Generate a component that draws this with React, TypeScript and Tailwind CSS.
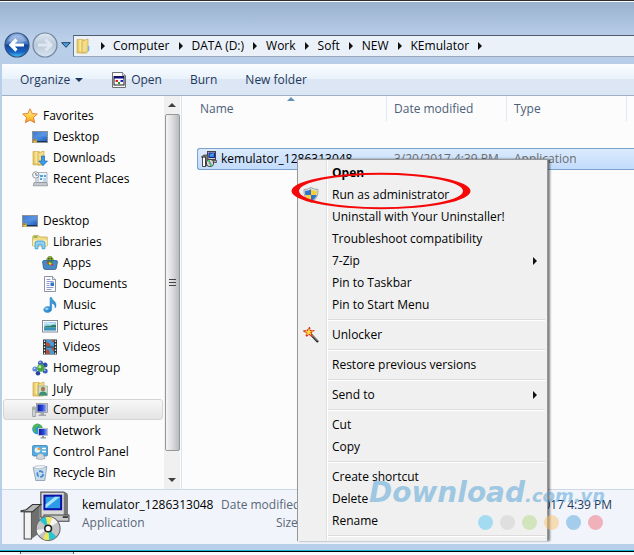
import type { ReactNode } from "react";

type IconProps = { children: ReactNode; box?: string; size?: string };

function Icon({ children, box = "0 0 16 16", size = "size-4" }: IconProps) {
  return (
    <svg viewBox={box} className={`${size} shrink-0`} aria-hidden="true">
      {children}
    </svg>
  );
}

function Gradients() {
  return (
    <svg className="absolute size-0" aria-hidden="true">
      <defs>
        <linearGradient id="g-screen" x1="0" y1="0" x2="1" y2="1">
          <stop offset="0" stopColor="#1c4fae" />
          <stop offset=".5" stopColor="#4a8be0" />
          <stop offset="1" stopColor="#1b56b4" />
        </linearGradient>
        <linearGradient id="g-navy" x1="0" y1="0" x2="1" y2="0">
          <stop offset="0" stopColor="#0a1c9c" />
          <stop offset=".55" stopColor="#2a45d8" />
          <stop offset="1" stopColor="#9db4f5" />
        </linearGradient>
        <linearGradient id="g-folder" x1="0" y1="0" x2="1" y2="0">
          <stop offset="0" stopColor="#e3bf4c" />
          <stop offset=".5" stopColor="#f9e89c" />
          <stop offset="1" stopColor="#e0bb50" />
        </linearGradient>
        <linearGradient id="g-star" x1="0" y1="0" x2="0" y2="1">
          <stop offset="0" stopColor="#fff3a0" />
          <stop offset=".6" stopColor="#ffc93c" />
          <stop offset="1" stopColor="#f59a23" />
        </linearGradient>
        <linearGradient id="g-back" x1="0" y1="0" x2="0" y2="1">
          <stop offset="0" stopColor="#8fb2e2" />
          <stop offset=".45" stopColor="#3f72bd" />
          <stop offset=".5" stopColor="#114296" />
          <stop offset=".8" stopColor="#1a66c8" />
          <stop offset="1" stopColor="#42c6f5" />
        </linearGradient>
        <linearGradient id="g-fwd" x1="0" y1="0" x2="0" y2="1">
          <stop offset="0" stopColor="#dfe8f2" />
          <stop offset=".5" stopColor="#b9c8da" />
          <stop offset="1" stopColor="#d8e4f1" />
        </linearGradient>
        <linearGradient id="g-note" x1="0" y1="0" x2="1" y2="1">
          <stop offset="0" stopColor="#63b8ee" />
          <stop offset="1" stopColor="#1776c4" />
        </linearGradient>
      </defs>
    </svg>
  );
}

const DesktopIcon = () => (
  <Icon>
    <rect x=".5" y="2.5" width="15" height="11" fill="url(#g-screen)" stroke="#8d9299" />
    <path d="M1 3h14v5C9 6 5 9 1 10z" fill="#6ba4ec" opacity=".45" />
    <path d="M1 12.5h14" stroke="#1a3055" />
    <circle cx="3" cy="12" r="2" fill="#e9c23a" />
    <path d="M3 10a2 2 0 0 1 2 2H3z" fill="#59b14b" />
    <path d="M1 12a2 2 0 0 1 2-2v2z" fill="#e4593a" />
  </Icon>
);

const StarIcon = () => (
  <Icon>
    <path d="M8 .8l2.2 4.7 5.1.5-3.8 3.5 1.1 5.2L8 12l-4.600 2.700 1.100-5.200L.7 6l5.100-.5z" fill="url(#g-star)" stroke="#e0752a" strokeWidth=".9" />
  </Icon>
);

const FolderShape = () => (
  <>
    <path d="M1 1.500h6l1 .8V15H1z" fill="url(#g-folder)" stroke="#cfae52" strokeWidth=".7" />
    <path d="M6 3l6-2V13.500L6 15z" fill="#f3dc85" stroke="#c9a746" strokeWidth=".7" />
    <path d="M1.500 13.500L8 15h3.500" fill="none" stroke="#d9b957" />
  </>
);

const DownloadsIcon = () => (
  <Icon>
    <FolderShape />
    <path d="M9.500 6h3v5h3L11 15.700 6.800 11h2.700z" fill="#3d9ae6" stroke="#1f6cb8" strokeWidth=".7" />
  </Icon>
);

const RecentIcon = () => (
  <Icon>
    <path d="M6 1.500h9v10H6z" fill="#eef4fa" stroke="#98a2ad" strokeWidth=".8" />
    <path d="M8 4h3v2H8zM12 4h2v2h-2zM8 7h2v2H8z" fill="#4aa3df" />
    <path d="M11 8h3M11 10h3" stroke="#7fb9e0" />
    <path d="M2 11.500h13l.7 3.300H1.200z" fill="#c3c8cc" stroke="#858c93" strokeWidth=".7" />
    <circle cx="3.800" cy="4" r="3.200" fill="#f3f6f8" stroke="#8d979f" strokeWidth="1" />
    <path d="M3.800 2v2.200h2" fill="none" stroke="#4c5b68" strokeWidth=".8" />
    <path d="M4 8v3" stroke="#98a2ad" />
  </Icon>
);

const LibrariesIcon = () => (
  <Icon>
    <path d="M.6 3l1-1.500h5L8 3h7.200v9H.6z" fill="#f1dc87" stroke="#c9a94d" strokeWidth=".8" />
    <path d="M1.500 3h4" stroke="#5cae45" strokeWidth="1.400" />
    <path d="M1 6h14v6H1z" fill="#f8ebb2" />
    <path d="M3 14.800V9.500Q3 7 5.500 7h5Q13 7 13 9.500v5.300h-3V11H6v3.800z" fill="#8cd0f4" stroke="#3e97cf" strokeWidth=".8" />
  </Icon>
);

const AppsIcon = () => (
  <Icon>
    <path d="M4.500 6Q5 1.500 8 1.500T11.500 6z" fill="#8db92e" stroke="#55771a" strokeWidth=".7" />
    <circle cx="6.800" cy="3.800" r=".7" fill="#222" />
    <circle cx="9.300" cy="3.800" r=".7" fill="#222" />
    <path d="M.6 7q0-1.500 1.500-1.500h12Q15.600 5.500 15.400 7l-1 6q-.3 1.500-2 1.500H3.500q-1.700 0-2-1.500z" fill="#4886c4" stroke="#2d5f96" strokeWidth=".8" />
    <path d="M5 6h6l-1.200 4H6.500z" fill="#2f8b35" />
    <path d="M6 8l2-1 2 2-2 1z" fill="#f5d033" />
    <path d="M5 7h2v1.500H5zM9 9h2v1.500H9z" fill="#d83a2b" />
  </Icon>
);

const DocumentIcon = () => (
  <Icon>
    <path d="M2.500.5h8l3 3v12h-11z" fill="#fff" stroke="#7f8791" strokeWidth=".9" />
    <path d="M10.500.5v3h3" fill="#dfe5ec" stroke="#7f8791" strokeWidth=".8" />
    <path d="M4.500 3.500h4M4.500 5.500h7M4.500 7.500h3M4.500 9.500h3M4.500 11.500h7M4.500 13.500h5" stroke="#8f9bd0" />
    <rect x="8.500" y="6.500" width="3.500" height="3.500" fill="#2f74c9" />
  </Icon>
);

const MusicIcon = () => (
  <Icon>
    <path d="M8 .5h1.700c.4 3 4.800 3.700 4.300 8.300-.1 1-.6 1.700-1 2.200.5-3-1.200-4.200-3.300-4.800V12c0 2-1.900 3.500-4.200 3.500S1.700 14.300 1.700 12.700 3.600 9.500 5.800 9.500c.9 0 1.600.2 2.200.5z" fill="url(#g-note)" stroke="#2380c6" strokeWidth=".5" />
    <ellipse cx="4.800" cy="11.800" rx="1.800" ry="1.100" fill="#9bd6f7" />
  </Icon>
);

const PicturesIcon = () => (
  <Icon>
    <rect x=".5" y="2.500" width="15" height="11.500" fill="#fff" stroke="#858c94" />
    <rect x="2" y="4" width="12" height="8.500" fill="#9fd3f0" />
    <path d="M2 9q3-2 6-1 3-2 6-1v2.500H2z" fill="#2d7d5e" />
    <path d="M2 9.500h12v3H2z" fill="#3d8fb8" />
    <path d="M2 5.500q3-1 5 0t5 0" stroke="#e4f5fd" fill="none" />
  </Icon>
);

const VideosIcon = () => (
  <Icon>
    <rect x="1" y=".5" width="14" height="15" fill="#2c3238" />
    <rect x="4" y="1" width="8" height="6.500" fill="#4a9ad4" />
    <rect x="4" y="8.500" width="8" height="6.500" fill="#4a9ad4" />
    <path d="M4 3l3 1 2 3H4zM9 1h3v3zM4 10l3 1 1 4H4zM9 9h3v4z" fill="#b0503a" />
    <path d="M2.500 1.500v14M13.500 1.500v14" stroke="#e6e9ec" strokeWidth="1.300" strokeDasharray="1.500 1.500" />
  </Icon>
);

const HomegroupIcon = () => (
  <Icon>
    <circle cx="8.500" cy="3" r="2.500" fill="#3c60c0" />
    <circle cx="13" cy="5" r="2.500" fill="#2f4fae" />
    <circle cx="3" cy="9" r="2.600" fill="#5d86da" />
    <circle cx="13.200" cy="11" r="2.500" fill="#3c60c0" />
    <circle cx="6" cy="13.300" r="2.300" fill="#27459e" />
    <circle cx="8.800" cy="8" r="3.700" fill="#46a83a" />
    <circle cx="7.800" cy="6.800" r="1.500" fill="#b6e89d" />
    <circle cx="2.500" cy="8.300" r=".9" fill="#c9dafa" />
    <circle cx="8" cy="2.300" r=".8" fill="#c9dafa" />
    <circle cx="12.800" cy="10.200" r=".8" fill="#c9dafa" />
  </Icon>
);

const UserFolderIcon = () => (
  <Icon>
    <FolderShape />
    <rect x="6.500" y="5" width="9" height="9.500" fill="#cfe0cf" stroke="#8fa28f" strokeWidth=".6" />
    <circle cx="11" cy="8" r="2.200" fill="#a87850" />
    <path d="M7 14.500q0-4 4-4t4.300 4z" fill="#3d8f7a" />
  </Icon>
);

const ComputerIcon = () => (
  <Icon>
    <path d="M.7 5h2.600v9.500H.7z" fill="#dcdfe2" stroke="#7b8288" strokeWidth=".7" />
    <path d="M1.200 7h1.600" stroke="#48a04a" />
    <rect x="4.500" y="1.500" width="11" height="9" fill="#c9ccd1" stroke="#85898f" strokeWidth=".7" />
    <rect x="5.500" y="2.500" width="9" height="7" fill="url(#g-navy)" />
    <path d="M8.500 10.500h3.500v2H8.500zM6.500 12.500h7.500v1.500H6.500z" fill="#a4a8ae" />
  </Icon>
);

const NetworkIcon = () => (
  <Icon>
    <circle cx="5.500" cy="6" r="5.300" fill="#2f93d8" />
    <path d="M1 4q2-4 5-3.500Q8 3 5 4t-1 4-2 1zM7 1q3 1 3.500 4L7.500 5z" fill="#52b848" />
    <rect x="6.500" y="5.500" width="9" height="7" fill="url(#g-navy)" stroke="#bfc4ca" />
    <path d="M10 13h2v1.500h-2zM8.500 14.300h5.500v1.200H8.500z" fill="#8f959c" />
  </Icon>
);

const ControlPanelIcon = () => (
  <Icon>
    <rect x=".6" y="1.500" width="14.800" height="10.500" rx="1" fill="#52aee6" stroke="#3a7fb0" strokeWidth=".8" />
    <circle cx="5.500" cy="6" r="2.800" fill="#e6f4fc" />
    <path d="M5.500 6V3.200A2.800 2.800 0 0 1 8.300 6z" fill="#f39a2b" />
    <path d="M10 4.500h4M10 7.500h4" stroke="#fff" strokeWidth="1.300" />
    <path d="M5 12q0-2.500 3.500-2.500T12 12l1 2.500q-4.500 2-9 0z" fill="#d3d8dc" stroke="#8a9197" strokeWidth=".6" />
  </Icon>
);

const RecycleIcon = () => (
  <Icon>
    <path d="M1.200 2.500l13.600-1-2 14H3.800z" fill="#c9dbe9" stroke="#8299ad" strokeWidth=".8" />
    <path d="M1.500 3q6 2 13-1L12 .7 4 1z" fill="#f5f9fc" stroke="#8fa2b4" strokeWidth=".6" />
    <circle cx="8.200" cy="9" r="2.900" fill="none" stroke="#3f86d6" strokeWidth="1.700" strokeDasharray="4.500 1.500" />
  </Icon>
);

const AppIcon = () => (
  <Icon>
    <path d="M1.500.5h10l3 3v12h-13z" fill="#fafafa" stroke="#6c7076" />
    <path d="M11.500.5v3h3" fill="#ddd" stroke="#6c7076" strokeWidth=".7" />
    <rect x="3" y="4.500" width="10" height="8.500" fill="#fff" stroke="#1a1a1a" />
    <path d="M3 5.500h10" stroke="#10108c" strokeWidth="2" />
    <path d="M4.500 8H7v2H4.500z" fill="#d22" />
    <path d="M7 10h2v2H7z" fill="#1a9a2a" />
    <path d="M9.500 8H12v2H9.500z" fill="#22c" />
  </Icon>
);

function InstallerIcon({ size }: { size: string }) {
  return (
    <Icon box="0 0 48 48" size={size}>
      <path d="M20 1h22l3 2v22H20z" fill="#dadada" stroke="#555" strokeWidth="1.200" />
      <path d="M42 1l4 3v22h-4z" fill="#777" />
      <rect x="22.500" y="3.500" width="18" height="15" fill="#0c12a8" />
      <path d="M24.500 5.500h14v11h-14z" fill="#2c9be8" />
      <path d="M24.500 13l9-7.500h5l-14 11z" fill="#a6e4fb" />
      <path d="M23 23h24v6H23z" fill="#c9c9c9" stroke="#444" />
      <path d="M41 25h5" stroke="#222" strokeWidth="1.500" />
      <path d="M4 20h7v26H4z" fill="#f2f2f2" stroke="#444" />
      <path d="M11 20l8-6v26l-8 6z" fill="#6f6f6f" />
      <path d="M1 19l5-1 6-5h8l-8 7H1z" fill="#b5b5b5" stroke="#333" />
      <circle cx="27" cy="36" r="11.500" fill="#c4c4c4" stroke="#666" />
      <path d="M27 36L19 28a11 11 0 0 1 6-3zM27 36l8 8a11 11 0 0 1-7 3z" fill="#27c4d2" />
      <path d="M27 36l-2-11a11 11 0 0 1 6 .7zM27 36l1 11a11 11 0 0 1-6-1z" fill="#f0e65a" />
      <path d="M27 36l4-10.300a11 11 0 0 1 5 4.300zM27 36l-9 6.500a11 11 0 0 1-2-5z" fill="#f5f5f5" />
      <circle cx="27" cy="36" r="3.200" fill="#fff" stroke="#222" strokeWidth="1.500" />
    </Icon>
  );
}

const SmallInstallerIcon = () => (
  <Icon>
    <rect x="6.500" y=".5" width="8" height="8" fill="#d0d0d0" stroke="#444" />
    <rect x="8" y="2" width="5.500" height="4.500" fill="#2b86e0" stroke="#10229c" />
    <path d="M8.500 5.500L12 2.500h1z" fill="#bfeafc" />
    <path d="M9 9.500h6.500v2H9z" fill="#a8a8a8" stroke="#333" strokeWidth=".7" />
    <path d="M1.500 6h3v9.500h-3z" fill="#fff" stroke="#333" strokeWidth=".9" />
    <path d="M.3 6L3 4h4v9l-2.500 2.500V6z" fill="#777" stroke="#333" strokeWidth=".7" />
    <circle cx="9" cy="12" r="3.700" fill="#dcdcdc" stroke="#222" strokeWidth=".8" />
    <path d="M9 12L6.500 9.700 9 8.700zM9 12l2.500 2.300L9 15.300z" fill="#2fd05c" />
    <circle cx="9" cy="12" r="1" fill="#fff" stroke="#222" strokeWidth=".5" />
  </Icon>
);

const ShieldIcon = () => (
  <Icon>
    <path d="M8 .5Q11 2.500 15 2.500q.8 9-7 13Q.2 11.500 1 2.500q4 0 7-2z" fill="#dfe3e8" stroke="#8b929b" strokeWidth=".8" />
    <path d="M8 2.200V8H2.300q-.4-2-.1-4.200Q5.500 3.700 8 2.200z" fill="#2f74c9" />
    <path d="M8 2.200q2.500 1.500 5.800 1.600.3 2.200-.1 4.200H8z" fill="#f7cf3a" />
    <path d="M2.300 8H8v6.200Q3.500 11.800 2.300 8z" fill="#f7cf3a" />
    <path d="M13.700 8H8v6.200q4.500-2.400 5.700-6.200z" fill="#2f74c9" />
  </Icon>
);

const WandIcon = () => (
  <Icon>
    <path d="M7.500 7l7.500 8" stroke="#222" strokeWidth="2.400" />
    <path d="M8.500 7.500l6 6.500" stroke="#bdbdbd" strokeWidth=".8" />
    <path d="M6.500.5l.8 3 3.200.2-2.600 2 1.300 3.500-3-1.700L3 9.500l.8-3.300L.6 4l3.600-.4z" fill="#ffdf3d" stroke="#d6381d" strokeWidth="1.200" strokeDasharray="2 .6" />
  </Icon>
);

function RightArrow() {
  return (
    <svg viewBox="0 0 4 8" className="h-2 w-1 shrink-0" aria-hidden="true">
      <path d="M0 0l4 4-4 4z" fill="#111" />
    </svg>
  );
}

function DownArrow({ fill }: { fill: string }) {
  return (
    <svg viewBox="0 0 8 4" className="h-1 w-2 shrink-0" aria-hidden="true">
      <path d="M0 0h8L4 4z" fill={fill} />
    </svg>
  );
}

const crumbs = ["Computer", "DATA (D:)", "Work", "Soft", "NEW", "KEmulator"];

function NavigationBar() {
  return (
    <header className="flex h-[62px] items-end bg-linear-to-b from-[#9ab2ce] via-[#bacfea] via-60% to-[#b7cde8] pb-[7px]">
      <div className="flex h-[25px] items-center pl-1">
        <button aria-label="Back" className="size-[26px]">
          <Icon box="0 0 26 26" size="size-[26px]">
            <circle cx="13" cy="13" r="12" fill="url(#g-back)" stroke="#34527f" strokeWidth="1.200" />
            <path d="M4 9a10 10 0 0 1 18 0q-9 4-18 0z" fill="#fff" opacity=".3" />
            <path d="M20 13H8M12.500 7.500L7 13l5.500 5.500" fill="none" stroke="#fff" strokeWidth="3.200" />
          </Icon>
        </button>
        <button aria-label="Forward" className="ml-[2px] size-[26px]">
          <Icon box="0 0 26 26" size="size-[26px]">
            <circle cx="13" cy="13" r="12" fill="url(#g-fwd)" stroke="#74859c" strokeWidth="1.200" />
            <path d="M6 13h12M13.500 7.500L19 13l-5.500 5.500" fill="none" stroke="#dfe8f1" strokeWidth="3" />
          </Icon>
        </button>
        <button aria-label="Recent pages" className="ml-[2px] flex w-3 justify-center">
          <svg viewBox="0 0 10 6" className="h-[6px] w-[10px]">
            <path d="M.7.7h8.600L5 5.300z" fill="#4fa0d8" stroke="#1d3f69" />
          </svg>
        </button>
      </div>
      <nav aria-label="Address" className="ml-px flex h-[22px] grow items-center border-y border-l border-t-[#4f5c6e] border-b-[#9aa9bd] border-l-[#6c7a8e] bg-[#ebf1f9] pl-[2px] text-black">
        <Icon>
          <FolderShape />
          <path d="M12.500 8v5" stroke="#6db6e6" strokeWidth="1.500" />
        </Icon>
        <span className="flex w-[21px] justify-center">
          <RightArrow />
        </span>
        {crumbs.map((c) => (
          <div key={c} className="flex items-center">
            <button>{c}</button>
            <span className="flex w-[22px] justify-center">
              <RightArrow />
            </span>
          </div>
        ))}
      </nav>
    </header>
  );
}

function Toolbar() {
  return (
    <div className="flex h-8 items-center border-b border-[#a0aec4] bg-[linear-gradient(#fbfdff,#e8f2fb_50%,#dce6f4_50%,#dce7f5)] pl-[18px] text-[#1e395b]">
      <button className="flex items-center gap-[5px]">
        Organize <DownArrow fill="#1e395b" />
      </button>
      <button className="ml-7 flex items-center gap-1">
        <AppIcon /> Open
      </button>
      <button className="ml-7">Burn</button>
      <button className="ml-7">New folder</button>
    </div>
  );
}

type Place = { label: string; icon: () => ReactNode; level: 0 | 1 | 2; selected?: boolean };

const favorites: Place[] = [
  { label: "Favorites", icon: StarIcon, level: 0 },
  { label: "Desktop", icon: DesktopIcon, level: 1 },
  { label: "Downloads", icon: DownloadsIcon, level: 1 },
  { label: "Recent Places", icon: RecentIcon, level: 1 },
];

const places: Place[] = [
  { label: "Desktop", icon: DesktopIcon, level: 0 },
  { label: "Libraries", icon: LibrariesIcon, level: 1 },
  { label: "Apps", icon: AppsIcon, level: 2 },
  { label: "Documents", icon: DocumentIcon, level: 2 },
  { label: "Music", icon: MusicIcon, level: 2 },
  { label: "Pictures", icon: PicturesIcon, level: 2 },
  { label: "Videos", icon: VideosIcon, level: 2 },
  { label: "Homegroup", icon: HomegroupIcon, level: 1 },
  { label: "July", icon: UserFolderIcon, level: 1 },
  { label: "Computer", icon: ComputerIcon, level: 1, selected: true },
  { label: "Network", icon: NetworkIcon, level: 1 },
  { label: "Control Panel", icon: ControlPanelIcon, level: 1 },
  { label: "Recycle Bin", icon: RecycleIcon, level: 1 },
];

const indents = ["pl-[18px]", "pl-[28px]", "pl-[38px]"];

function PlaceList({ items }: { items: Place[] }) {
  return (
    <ul>
      {items.map(({ label, icon: PlaceIcon, level, selected }) => (
        <li key={label}>
          <button
            className={`flex h-[21px] w-full items-center gap-[5px] rounded-[3px] border ${indents[level]} ${
              selected ? "border-[#d5d5d5] bg-linear-to-b from-[#f8f8f8] to-[#e4e4e4]" : "border-transparent"
            }`}
          >
            <PlaceIcon /> {label}
          </button>
        </li>
      ))}
    </ul>
  );
}

function Sidebar() {
  return (
    <aside className="flex w-[180px] shrink-0 border-r border-[#d9e4f1]">
      <nav aria-label="Places" className="flex grow flex-col gap-[21px] px-px pt-[9px] pb-[6px] text-black">
        <PlaceList items={favorites} />
        <PlaceList items={places} />
      </nav>
      <div className="mr-px flex w-4 flex-col items-center bg-[#f0f0f0]">
        <button aria-label="Scroll up" className="flex h-[18px] w-full rotate-180 items-center justify-center">
          <DownArrow fill="#404040" />
        </button>
        <div className="flex w-[15px] grow flex-col items-center justify-center gap-[2px] rounded-[2px] border border-[#979797] bg-linear-to-r from-[#f5f5f5] via-[#dcdcdf] to-[#b9bac0]">
          <span className="h-px w-[7px] bg-[#444]" />
          <span className="h-px w-[7px] bg-[#444]" />
          <span className="h-px w-[7px] bg-[#444]" />
        </div>
        <button aria-label="Scroll down" className="flex h-[38px] w-full items-end justify-center pb-[7px]">
          <DownArrow fill="#404040" />
        </button>
      </div>
    </aside>
  );
}

function FileList() {
  return (
    <main className="grow pl-[15px]">
      <table className="w-full table-fixed border-separate border-spacing-0 text-left">
        <colgroup>
          <col className="w-[190px]" />
          <col className="w-[120px]" />
          <col className="w-[120px]" />
          <col />
        </colgroup>
        <thead className="text-[#4c607a]">
          <tr className="h-[25px]">
            <th className="relative border-r border-[#dfeaf7] pl-[3px] font-normal">
              Name
              <svg viewBox="0 0 8 4" className="absolute top-px left-[90px] h-1 w-2" aria-hidden="true">
                <path d="M0 4h8L4 0z" fill="#5f93b5" />
              </svg>
            </th>
            <th className="border-r border-[#dfeaf7] pl-[7px] font-normal">Date modified</th>
            <th className="border-r border-[#dfeaf7] pl-[7px] font-normal">Type</th>
            <th aria-label="Size" />
          </tr>
        </thead>
        <tbody>
          <tr className="h-[27px]">
            <td colSpan={4} />
          </tr>
          <tr className="h-[22px] bg-linear-to-b from-[#dcebfc] to-[#c1dbfc] text-[#6d6d6d]">
            <td className="rounded-l-[3px] border-y border-l border-[#7da2ce] pl-[3px] text-black">
              <div className="flex items-center gap-1">
                <SmallInstallerIcon /> kemulator_1286313048
              </div>
            </td>
            <td className="border-y border-[#7da2ce] pl-[7px]">3/20/2017 4:39 PM</td>
            <td className="border-y border-[#7da2ce] pl-[7px]">Application</td>
            <td className="border-y border-[#7da2ce]" />
          </tr>
        </tbody>
      </table>
    </main>
  );
}

function DetailsPane() {
  return (
    <footer className="flex h-[55px] items-start border-t border-[#ccd9ea] bg-[#f1f5fb] pr-[22px] pl-[18px] text-[#5a6779]">
      <div className="pt-px">
        <InstallerIcon size="size-[50px]" />
      </div>
      <div className="grid grow grid-cols-[133px_80px_1fr] gap-x-[6px] pt-[6px] pl-3 leading-[18px]">
        <span className="text-black">kemulator_1286313048</span>
        <span className="text-right whitespace-nowrap">Date modified:</span>
        <span className="text-right text-[#1e395b]">3/20/2017 4:39 PM</span>
        <span>Application</span>
        <span className="text-right">Size:</span>
      </div>
    </footer>
  );
}

type Entry = { label: string; bold?: boolean; icon?: () => ReactNode; submenu?: boolean };

const menuGroups: Entry[][] = [
  [
    { label: "Open", bold: true },
    { label: "Run as administrator", icon: ShieldIcon },
    { label: "Uninstall with Your Uninstaller!" },
    { label: "Troubleshoot compatibility" },
    { label: "7-Zip", submenu: true },
    { label: "Pin to Taskbar" },
    { label: "Pin to Start Menu" },
  ],
  [{ label: "Unlocker", icon: WandIcon }],
  [{ label: "Restore previous versions" }],
  [{ label: "Send to", submenu: true }],
  [{ label: "Cut" }, { label: "Copy" }],
  [{ label: "Create shortcut" }, { label: "Delete" }, { label: "Rename" }],
];

function ContextMenu() {
  return (
    <div
      role="menu"
      className="absolute top-[159px] left-[297px] w-[251px] border border-b-0 border-[#979797] bg-[linear-gradient(90deg,#f0f0f0_28px,#e0e0e0_28px,#e0e0e0_29px,#fff_29px,#fff_30px,#f0f0f0_30px)] pt-[2px] pb-px text-black shadow-[2px_0px_2px_#00000080]"
    >
      {menuGroups.map((group) => (
        <div key={group[0].label}>
          {group.map(({ label, bold, icon: EntryIcon, submenu }) => (
            <button key={label} role="menuitem" className="flex h-[22px] w-full items-center pr-[10px] pl-[5px]">
              <span className="mr-[13px] size-4">{EntryIcon && <EntryIcon />}</span>
              <span className={bold ? "grow text-left font-bold" : "grow text-left"}>{label}</span>
              {submenu && <RightArrow />}
            </button>
          ))}
          <div role="separator" className="mr-[2px] ml-[30px] flex h-2 flex-col justify-center">
            <div className="h-[2px] border-t border-b border-t-[#dcdcdc] border-b-white" />
          </div>
        </div>
      ))}
    </div>
  );
}

function Highlight() {
  return (
    <svg viewBox="0 0 180 38" className="pointer-events-none absolute top-[172px] left-[291px] h-[38px] w-[180px]" aria-hidden="true">
      <path
        fillRule="evenodd"
        fill="#f50808"
        d="M.5 19a89.500 18.200 0 1 1 179 0a89.500 18.200 0 1 1-179 0zM8 19a82 16.300 0 1 0 164 0a82 16.300 0 1 0-164 0z"
      />
    </svg>
  );
}

const dots = ["bg-[#5cc8f2]", "bg-[#cfcfcf]", "bg-[#b5d98a]", "bg-[#fbc46f]", "bg-[#5aa5dc]", "bg-[#f0707d]"];

function Watermark() {
  return (
    <div className="pointer-events-none absolute top-[477px] left-[369px] opacity-50">
      <div className="font-['DejaVu_Sans',sans-serif] text-[28px] leading-[32px] font-bold whitespace-nowrap text-[#4f9fd6] italic">
        Download<span className="text-[18px]">.com.vn</span>
      </div>
      <div className="mt-[3px] ml-[109px] flex gap-[7px]">
        {dots.map((c) => (
          <span key={c} className={`size-[15px] rounded-full ${c}`} />
        ))}
      </div>
    </div>
  );
}

export default function App() {
  return (
    <div className="relative w-full overflow-hidden bg-white font-['Open_Sans','Noto_Sans',sans-serif] text-[12px] leading-4">
      <Gradients />
      <div className="border-t border-[#2e2a33] pt-px">
        <div className="border-b border-black bg-[#b8cfe9]">
          <div className="border-b border-[#19b9d8] pb-[6px]">
            <NavigationBar />
            <div className="ml-[2px]">
              <Toolbar />
              <div className="flex bg-[#fcfcfc]">
                <Sidebar />
                <FileList />
              </div>
              <DetailsPane />
            </div>
          </div>
        </div>
      </div>
      <div className="flex h-[2px] bg-[#f4f7fb] pl-5">
        <div className="w-[54px] border-x border-[#5d6675] bg-[#dbe6f2]" />
      </div>
      <ContextMenu />
      <Highlight />
      <Watermark />
    </div>
  );
}
